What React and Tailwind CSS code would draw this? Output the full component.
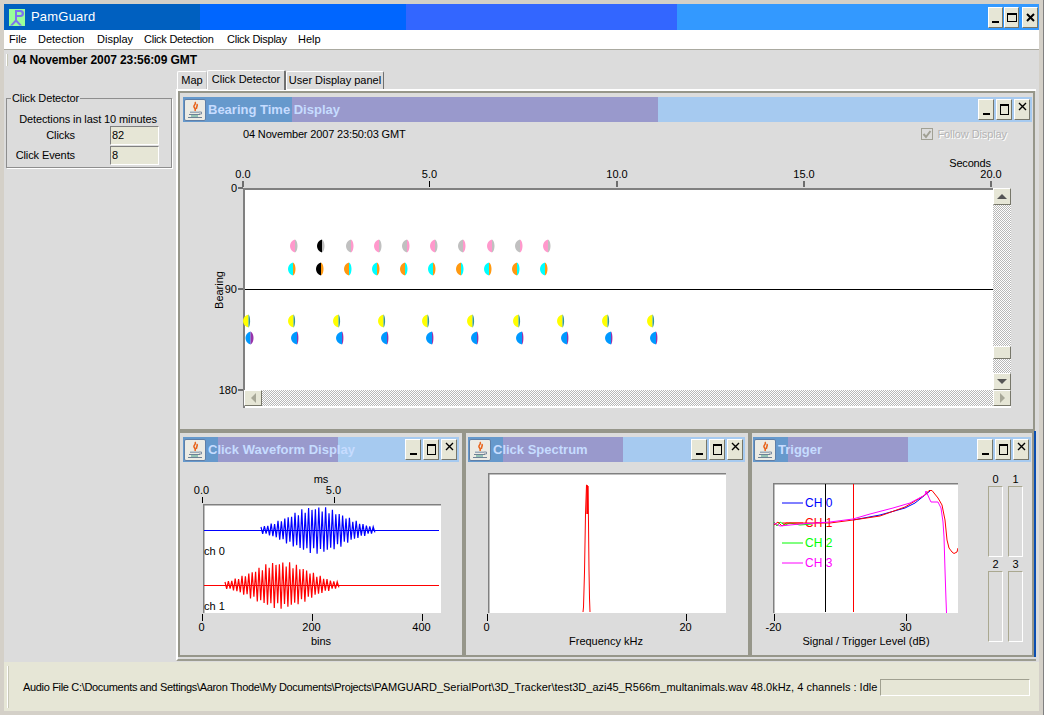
import React from 'react';

const row1 = [[294, 0], [321, 2], [350, 1], [378, 0], [406, 1], [434, 0], [462, 1], [491, 0], [519, 1], [547, 0]];
const row2 = [[292, 0], [320, 2], [348, 1], [376, 0], [404, 1], [432, 0], [460, 1], [488, 0], [516, 1], [544, 0]];
const row3 = [247, 292, 337, 382, 426, 471, 517, 561, 606, 651];
const row4 = [250, 295, 340, 385, 430, 475, 520, 565, 609, 654];

const TICKS_TOP = [[243, '0.0'], [429.5, '5.0'], [617, '10.0'], [804, '15.0'], [991, '20.0']];

// left lobe and right lobe share a split line, l and r are how far each lobe reaches
const Dot = ({ x, y, left, right, split = 1, l = 5, r = 2.5 }) => {
  const s = x + split;
  const lx = s - l / 0.75;
  const rx = s + r / 0.75;
  return (
    <g>
      <path d={`M${s} ${y - 6.5}C${lx} ${y - 5} ${lx} ${y + 5} ${s} ${y + 6.5}Z`} fill={left} />
      <path d={`M${s} ${y - 6.5}C${rx} ${y - 5} ${rx} ${y + 5} ${s} ${y + 6.5}Z`} fill={right} />
    </g>
  );
};

// zigzag that fakes the click waveform
const wave = (x0, x1, center, y, amp) => {
  const pts = [];
  let i = 0;
  for (let x = x0; x <= x1; x += 1.7) {
    const env = Math.exp(-Math.pow((x - center) / 40, 2));
    const a = amp * env * (0.88 + 0.12 * Math.sin(i * 1.37));
    pts.push(`${x.toFixed(1)},${(y + (i % 2 ? a : -a)).toFixed(1)}`);
    i++;
  }
  return pts.join(' ');
};

const JavaIcon = () => (
  <svg width="18" height="18" viewBox="0 0 18 18">
    <path d="M9 1c2 2-2 3-1 5s2 2 1 4M11 3c1 2-1 3-.5 5" fill="none" stroke="#e8641c" strokeWidth="1.6" />
    <path d="M4 10.5h9v1.5h-9z" fill="#9aa8b8" />
    <path d="M13 11h2.5v2h-2.5" fill="none" stroke="#7d8ca0" />
    <path d="M3 13h11v1h-11zM2 16h14v1h-14z" fill="#6f8296" />
    <path d="M5 14.5h7v1h-7z" fill="#3f9a88" />
  </svg>
);

const Logo = () => (
  <svg width="16" height="17" viewBox="0 0 16 17" className="shrink-0">
    <rect width="16" height="17" fill="#99ff99" />
    <path d="M6 1h5.5a3 3 0 0 1 0 7H8v3l5 5.5h-2.5L7 13l-3.5 3.5H1L6 11Z M8 3v3h3.2a1.5 1.5 0 0 0 0-3Z" fill="#7c74f0" fillRule="evenodd" />
  </svg>
);

const Bevel = ({ className = '', children }) => (
  <div className={`flex items-center justify-center bg-[#e6e6d6] border border-t-white border-l-white border-r-[#77776a] border-b-[#77776a] ${className}`}>
    {children}
  </div>
);

const FrameButtons = () => (
  <div className="flex items-center gap-[2px]">
    <Bevel className="w-[16px] h-[21px]"><span className="w-[7px] h-[2px] bg-black mt-[9px]" /></Bevel>
    <Bevel className="w-[16px] h-[21px]"><span className="w-[9px] h-[11px] border border-black border-t-2" /></Bevel>
    <Bevel className="w-[16px] h-[21px] items-start">
      <svg width="9" height="9" viewBox="0 0 9 9" className="mt-[2px]"><path d="M1 1l7 7M8 1l-7 7" stroke="#000" strokeWidth="1.4" /></svg>
    </Bevel>
  </div>
);

const Frame = ({ title, barClass, className = '', children }) => (
  <div className={`flex flex-col bg-[#dcdcdc] border-2 border-[#96968a] pt-[4px] ${className}`}>
    <div className={`h-[25px] flex items-center justify-between pl-[1px] pr-[2px] shrink-0 ${barClass}`}>
      <div className="flex items-center gap-[2px]">
        <div className="w-[22px] h-[22px] flex items-center justify-center bg-[#ecebe4] border border-[#5f7fa8] rounded-[2px]">
          <JavaIcon />
        </div>
        <span className="text-[13px] font-bold text-[#c6dcff]">{title}</span>
      </div>
      <FrameButtons />
    </div>
    {children}
  </div>
);

const Meter = ({ label }) => (
  <div className="flex flex-col items-center w-[15px]">
    <span className="h-[14px] leading-[14px]">{label}</span>
    <div className="w-[15px] h-[71px] border border-t-[#aaa890] border-l-[#aaa890] border-r-white border-b-white" />
  </div>
);

const BearingChart = () => (
  <svg width="848" height="282" viewBox="183 146 848 282" className="block">
    <rect x="244" y="188" width="767" height="220" fill="#fff" />
    <rect x="244" y="188" width="767" height="2" fill="#808080" />
    <rect x="243" y="188" width="2" height="220" fill="#808080" />
    {TICKS_TOP.map(([x, t]) => (
      <g key={t}>
        <line x1={x} x2={x} y1="181" y2="187" stroke="#000" />
        <text x={x} y="178" textAnchor="middle">{t}</text>
      </g>
    ))}
    <text x="970" y="167" textAnchor="middle" letterSpacing="-0.2">Seconds</text>
    {[[188, '0'], [289, '90'], [390, '180']].map(([y, t]) => (
      <g key={t}>
        <line x1="238" x2="243" y1={y} y2={y} stroke="#000" />
        <text x="237" y={y + 4} textAnchor="end">{t}</text>
      </g>
    ))}
    <text transform="translate(223 290) rotate(-90)" textAnchor="middle">Bearing</text>
    <line x1="245" x2="993" y1="289.5" y2="289.5" stroke="#000" />
    {row1.map(([x, k]) => (
      <Dot key={x} x={x} y={246} left={k === 2 ? '#000' : k ? '#c0c0c0' : '#ff99cc'} right={k === 1 ? '#ff99cc' : '#c0c0c0'} />
    ))}
    {row2.map(([x, k]) => (
      <Dot key={x} x={x} y={269} left={k === 2 ? '#000' : k ? '#ff9911' : '#00ffff'} right={k === 1 ? '#00ffff' : '#ff9911'} />
    ))}
    {row3.map((x) => <Dot key={x} x={x} y={321} split={1.5} l={5.5} r={1.6} left="#ffff00" right="#339999" />)}
    {row4.map((x, i) => <Dot key={x} x={x} y={338} split={i ? 2 : 0.5} l={i ? 6 : 5} r={i ? 1.4 : 3} left="#0099ff" right="#9933aa" />)}
  </svg>
);

const WaveformChart = () => (
  <svg width="276" height="193" viewBox="183 462 276 193" className="block shrink-0">
    <rect x="203" y="504" width="238" height="109" fill="#fff" />
    <rect x="203" y="504" width="238" height="1.5" fill="#808080" />
    <rect x="203" y="504" width="1.5" height="109" fill="#808080" />
    {[[202.5, '0.0'], [334.5, '5.0']].map(([x, t]) => (
      <g key={t}>
        <line x1={x} x2={x} y1="497" y2="503" stroke="#000" />
        <text x={x - 1} y="494" textAnchor="middle">{t}</text>
      </g>
    ))}
    <text x="321" y="483" textAnchor="middle">ms</text>
    {[[202.5, '0'], [312.5, '200'], [422.5, '400']].map(([x, t]) => (
      <g key={t}>
        <line x1={x} x2={x} y1="614" y2="621" stroke="#000" />
        <text x={x - 1} y="631" textAnchor="middle">{t}</text>
      </g>
    ))}
    <text x="321" y="645" textAnchor="middle">bins</text>
    <line x1="204" x2="439" y1="530.5" y2="530.5" stroke="#0000ff" />
    <polyline points={wave(261, 375, 317, 530, 24)} fill="none" stroke="#0000ff" strokeWidth="1.2" />
    <text x="204" y="555">ch 0</text>
    <line x1="204" x2="439" y1="585.5" y2="585.5" stroke="#ff0000" />
    <polyline points={wave(225, 339, 281, 585, 24)} fill="none" stroke="#ff0000" strokeWidth="1.2" />
    <text x="204" y="610">ch 1</text>
  </svg>
);

const SpectrumChart = () => (
  <svg width="277" height="193" viewBox="468 462 277 193" className="block shrink-0">
    <rect x="488" y="473" width="238" height="140" fill="#fff" />
    <rect x="488" y="473" width="238" height="1.5" fill="#808080" />
    <rect x="488" y="473" width="1.5" height="140" fill="#808080" />
    {[[487.5, '0'], [686.5, '20']].map(([x, t]) => (
      <g key={t}>
        <line x1={x} x2={x} y1="614" y2="621" stroke="#000" />
        <text x={x - 1} y="631" textAnchor="middle">{t}</text>
      </g>
    ))}
    <text x="606" y="645" textAnchor="middle">Frequency kHz</text>
    <polyline points="583,612 583.5,607 584.5,572 585.5,514 586.5,485 588,486 588.5,523 589,570 589.5,598 590,612" fill="none" stroke="#ff0000" />
    <rect x="586.3" y="486" width="2" height="28" fill="#ff0000" />
  </svg>
);

const LEGEND = [['CH 0', '#0000ff', 503], ['CH 1', '#ff0000', 523], ['CH 2', '#00ff00', 543], ['CH 3', '#ff00ff', 563]];

const TriggerChart = () => (
  <svg width="205" height="193" viewBox="753 462 205 193" className="block shrink-0">
    <rect x="773" y="483" width="185" height="130" fill="#fff" />
    <rect x="773" y="483" width="185" height="1.5" fill="#808080" />
    <rect x="773" y="483" width="1.5" height="130" fill="#808080" />
    {[[774.5, '-20'], [906.5, '30']].map(([x, t]) => (
      <g key={t}>
        <line x1={x} x2={x} y1="614" y2="621" stroke="#000" />
        <text x={x - 1} y="631" textAnchor="middle">{t}</text>
      </g>
    ))}
    <text x="866" y="645" textAnchor="middle">Signal / Trigger Level (dB)</text>
    {LEGEND.map(([t, c, y]) => (
      <g key={t}>
        <line x1="782" x2="803" y1={y} y2={y} stroke={c} />
        <text x="805" y={y + 4} fill={c} fontSize="12">{t}</text>
      </g>
    ))}
    <line x1="825.5" x2="825.5" y1="484" y2="612" stroke="#000" />
    <line x1="853.5" x2="853.5" y1="484" y2="612" stroke="#ff0000" />
    <polyline points="774,522 777,526 780,522 785,525 790,523 800,525 812,524" fill="none" stroke="#00ff00" />
    <polyline points="853,520 880,515 905,508 915,503 925,495 930,491" fill="none" stroke="#0000ff" />
    <polyline points="774,525 778,522 782,526 786,523 800,523 830,523 853,520 880,516 905,507 925,495 929,490.5 932,490.5 938,498 942,505 945,520 947,540 949,548 952,552 954,553.5 957,552 958,548" fill="none" stroke="#ff0000" />
    <polyline points="774,523 780,526 800,524 830,522 853,519 870,514 893,508 910,503 925,495 926,491 930,500 931,502 938,502 941,508 943,522 944,537 945,570 946,600 946.5,613" fill="none" stroke="#ff00ff" />
  </svg>
);

const DITHER = 'bg-[repeating-conic-gradient(#b8b8b8_0_25%,#ffffff_0_50%)] bg-[length:2px_2px]';

export default function App() {
  return (
    <div className="w-[1044px] h-[715px] overflow-hidden flex flex-col bg-[#d4d0c8] pt-[4px] px-[4px] pb-[4px] font-['Liberation_Sans',Arial,sans-serif] text-[11px] text-black border-r border-[#808080]">
      {/* title bar */}
      <div className="h-[26px] shrink-0 flex items-center justify-between pl-[5px] pr-[1px] bg-[linear-gradient(to_right,#0060c0_196px,#0066ff_196px,#0066ff_402px,#3366ff_402px,#3366ff_673px,#3399ff_673px)]">
        <div className="flex items-center gap-[6px]">
          <Logo />
          <span className="text-[13px] text-white tracking-[0.2px]">PamGuard</span>
        </div>
        <div className="flex items-center gap-[1px]">
          <Bevel className="w-[15px] h-[21px]"><span className="w-[7px] h-[2px] bg-black mt-[9px]" /></Bevel>
          <Bevel className="w-[15px] h-[21px]"><span className="w-[10px] h-[9px] border border-black border-t-2" /></Bevel>
          <Bevel className="w-[16px] h-[21px] ml-[2px]">
            <svg width="9" height="9" viewBox="0 0 9 9"><path d="M1 1l7 7M8 1l-7 7" stroke="#000" strokeWidth="2" /></svg>
          </Bevel>
        </div>
      </div>

      {/* menu bar */}
      <div className="h-[20px] shrink-0 bg-white border-b border-[#aaa9a0] flex items-center pl-[5px]">
        <span className="w-[29px]">File</span>
        <span className="w-[59px]">Detection</span>
        <span className="w-[47px]">Display</span>
        <span className="w-[83px] tracking-[-0.25px]">Click Detection</span>
        <span className="w-[71px] tracking-[-0.25px]">Click Display</span>
        <span>Help</span>
      </div>

      <div className="flex-1 min-h-0 flex flex-col bg-[#dcdcdc]">
        {/* clock strip */}
        <div className="h-[19px] shrink-0 flex items-center pl-[2px] gap-[5px]">
          <span className="w-[2px] h-[12px] bg-[#c8c8b8] border-l border-white" />
          <span className="text-[12px] font-bold tracking-[-0.1px]">04 November 2007 23:56:09 GMT</span>
        </div>

        <div className="flex-1 min-h-0 flex">
          {/* side panel */}
          <div className="w-[172px] shrink-0 pl-[2px] pr-[4px] pt-[29px]">
            <div className="relative h-[70px] border border-[#8e8e8e] shadow-[1px_1px_0_#fff] pt-[13px]">
              <span className="absolute left-[4px] -top-[7px] bg-[#dcdcdc] px-[1px] leading-[13px] tracking-[-0.1px]">Click Detector</span>
              <div className="text-center h-[14px] leading-[14px] pr-[2px] tracking-[-0.1px]">Detections in last 10 minutes</div>
              <div className="flex flex-col gap-[1px]">
                {[['Clicks', '82'], ['Click Events', '8']].map(([label, val]) => (
                  <div key={label} className="flex items-center h-[19px]">
                    <span className="w-[68px] text-right tracking-[-0.1px]">{label}</span>
                    <span className="ml-[35px] w-[49px] h-[19px] leading-[17px] pl-[1px] bg-[#e6e6d6] border border-t-[#808080] border-l-[#808080] border-r-white border-b-white">{val}</span>
                  </div>
                ))}
              </div>
            </div>
          </div>

          {/* tabbed area */}
          <div className="flex-1 min-w-0 flex flex-col">
            <div className="h-[20px] shrink-0 flex items-end pl-[1px]">
              <div className="h-[18px] w-[30px] flex items-center justify-center bg-[#dcdcdc] border border-b-0 border-white border-r-[#c0c0c0] rounded-t-[2px]">Map</div>
              <div className="h-[20px] w-[79px] pb-[3px] flex items-center justify-center bg-[#dcdcdc] border border-b-0 border-white border-r-[#707070] border-r-2 rounded-t-[2px] relative z-10 -mb-[1px]">Click Detector</div>
              <div className="h-[18px] w-[98px] flex items-center justify-center bg-[#dcdcdc] border border-b-0 border-white border-r-[#707070] rounded-t-[2px]">User Display panel</div>
            </div>
            <div className="w-[860px] h-[572px] border-2 border-b-[#9c9c90] border-white border-r-0 flex flex-col">
              <Frame
                title="Bearing Time Display"
                className="w-[857px] h-[340px] shrink-0 pl-[3px] pr-[1px]"
                barClass="bg-[linear-gradient(to_right,#6699cc_109px,#9999cc_109px,#9999cc_475px,#a6caf0_475px)]"
              >
                <div className="relative flex-1 min-h-0">
                  <div className="h-[24px] flex items-center justify-between pl-[60px] pr-[25px]">
                    <span className="tracking-[-0.15px]">04 November 2007 23:50:03 GMT</span>
                    <span className="flex items-center gap-[4px] text-[#b4b4b4] [text-shadow:1px_1px_0_#fff] tracking-[-0.1px]">
                      <span className="w-[12px] h-[12px] flex items-center justify-center bg-[#dcdcdc] border border-[#a0a094]">
                        <svg width="10" height="10" viewBox="0 0 10 10"><path d="M1.5 5l2.5 3 4.5-6" fill="none" stroke="#a0a094" strokeWidth="2" /></svg>
                      </span>
                      Follow Display
                    </span>
                  </div>
                  <BearingChart />
                  {/* vertical scroll bar */}
                  <div className={`absolute left-[810px] top-[66px] w-[18px] h-[202px] flex flex-col justify-between ${DITHER}`}>
                    <Bevel className="w-[18px] h-[17px]"><span className="border-x-[5px] border-x-transparent border-b-[5px] border-b-[#555]" /></Bevel>
                    <div className="flex flex-col">
                      <Bevel className="w-[18px] h-[13px] mb-[14px]" />
                      <Bevel className="w-[18px] h-[17px]"><span className="border-x-[5px] border-x-transparent border-t-[5px] border-t-[#555]" /></Bevel>
                    </div>
                  </div>
                  {/* horizontal scroll bar */}
                  <div className={`absolute left-[61px] top-[268px] w-[767px] h-[16px] flex justify-between ${DITHER}`}>
                    <Bevel className="w-[18px] h-[16px]"><span className="border-y-[5px] border-y-transparent border-r-[5px] border-r-[#a8a898]" /></Bevel>
                    <Bevel className="w-[18px] h-[16px]"><span className="border-y-[5px] border-y-transparent border-l-[5px] border-l-[#a8a898]" /></Bevel>
                  </div>
                </div>
              </Frame>

              <div className="h-[226px] shrink-0 flex border-r-2 border-[#0a4db0]">
                <Frame
                  title="Click Waveform Display"
                  className="w-[286px] px-[3px]"
                  barClass="bg-[linear-gradient(to_right,#6699cc_35px,#9999cc_35px,#9999cc_155px,#a6caf0_155px)]"
                >
                  <WaveformChart />
                </Frame>
                <Frame
                  title="Click Spectrum"
                  className="w-[286px] pl-[2px] pr-[3px]"
                  barClass="bg-[linear-gradient(to_right,#6699cc_35px,#9999cc_35px,#9999cc_155px,#a6caf0_155px)]"
                >
                  <SpectrumChart />
                </Frame>
                <Frame
                  title="Trigger"
                  className="flex-1 min-w-0 px-[1px]"
                  barClass="bg-[linear-gradient(to_right,#6699cc_35px,#9999cc_35px,#9999cc_155px,#a6caf0_155px)]"
                >
                  <div className="flex">
                    <TriggerChart />
                    <div className="grid grid-cols-2 w-[35px] ml-[30px] mt-[10px] h-fit gap-x-[5px]">
                      <Meter label="0" />
                      <Meter label="1" />
                      <Meter label="2" />
                      <Meter label="3" />
                    </div>
                  </div>
                </Frame>
              </div>
            </div>
          </div>
        </div>

        {/* status bar */}
        <div className="h-[49px] shrink-0 mt-[1px] bg-[#e6e6d6] flex items-center pl-[3px] pr-[9px] pt-[1px]">
          <span className="w-[2px] h-[42px] bg-[#c8c8b8] border-l border-white mr-[14px]" />
          <span className="flex-1 min-w-0 whitespace-nowrap tracking-[-0.33px]">Audio File C:\Documents and Settings\Aaron Thode\My Documents\Projects\<span className="tracking-normal">PAMGUARD_SerialPort\3D_Tracker\test3D_azi45_R566m_multanimals.wav 48.0kHz, 4 channels : Idle</span></span>
          <span className="w-[150px] h-[17px] border border-t-[#a0a090] border-l-[#a0a090] border-r-white border-b-white" />
        </div>
      </div>
    </div>
  );
}
